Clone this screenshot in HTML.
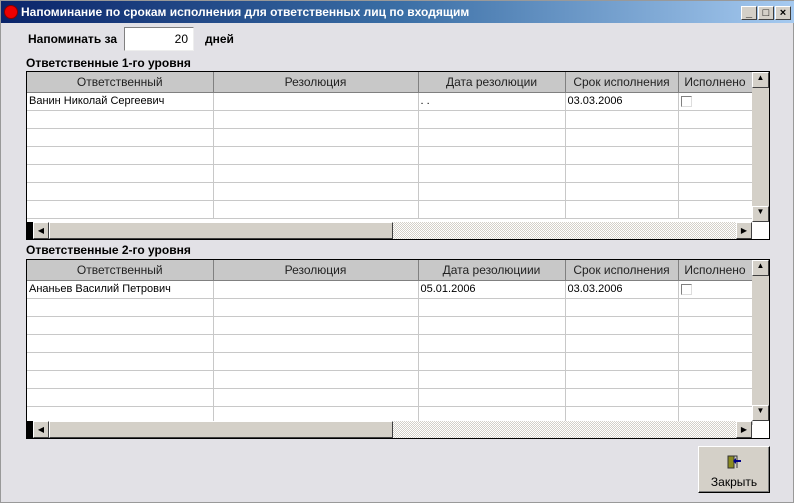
<!DOCTYPE html><html><head><meta charset="utf-8"><style>
*{margin:0;padding:0;box-sizing:border-box}
body{width:794px;height:503px;background:#e2e1e6;font-family:"Liberation Sans",sans-serif;position:relative;overflow:hidden;border:1px solid #999}
.abs{position:absolute}
.title{left:0;top:0;width:794px;height:22px;background:linear-gradient(90deg,#0a246a,#3a6ea5 50%,#a6caf0);color:#fff;font-weight:bold;font-size:12px;line-height:22px;padding-left:20px}
.dot{left:3px;top:4px;width:14px;height:14px;border-radius:50%;background:#e00;border:1px solid #800}
.wb{top:5px;width:16px;height:14px;background:#d4d0c8;border:1px solid;border-color:#fff #404040 #404040 #fff;font-size:11px;line-height:12px;text-align:center;color:#000;font-weight:bold}
.lbl{font-size:12px;font-weight:bold}
.grid{border:1px solid #000;background:#fff;overflow:hidden}
table{border-collapse:collapse;font-size:11px;table-layout:fixed}
th{background:#c8c8c8;font-weight:normal;font-size:12px;height:20px;border-right:1px solid #808080;border-bottom:1px solid #808080;color:#222}
td{height:18px;border-right:1px solid #c8c8c8;border-bottom:1px solid #c8c8c8;padding-left:2px;white-space:nowrap}
.cb{display:inline-block;width:11px;height:11px;border:1px solid #808080;border-right-color:#ddd;border-bottom-color:#ddd;vertical-align:middle}
.vs{background:#d4d0c8}
.btn{background:#d4d0c8;border:1px solid;border-color:#fff #404040 #404040 #fff}
.hs{background:repeating-conic-gradient(#d4d0c8 0 25%,#fff 0 50%) 0 0/2px 2px}
</style></head><body>
<div class="abs title">Напоминание по срокам исполнения для ответственных лиц по входящим</div>
<div class="abs dot"></div>
<div class="abs wb" style="left:740px">_</div><div class="abs wb" style="left:757px">□</div><div class="abs wb" style="left:774px">×</div>
<div class="abs lbl" style="left:27px;top:31px">Напоминать за</div>
<div class="abs" style="left:123px;top:26px;width:70px;height:24px;background:#fff;border:1px solid;border-color:#808080 #eee #eee #808080;font-size:12px;text-align:right;padding:4px 5px 0 0">20</div>
<div class="abs lbl" style="left:204px;top:31px">дней</div>

<div class="abs lbl" style="left:25px;top:55px">Ответственные 1-го уровня</div>
<div class="abs grid" style="left:25px;top:70px;width:744px;height:169px">
<table style="width:725px"><colgroup><col style="width:186px"><col style="width:205px"><col style="width:147px"><col style="width:113px"><col style="width:74px"></colgroup>
<tr><th>Ответственный</th><th>Резолюция</th><th>Дата резолюции</th><th>Срок исполнения</th><th>Исполнено</th></tr>
<tr><td>Ванин Николай Сергеевич</td><td></td><td>. .</td><td>03.03.2006</td><td><span class="cb"></span></td></tr>
<tr><td></td><td></td><td></td><td></td><td></td></tr><tr><td></td><td></td><td></td><td></td><td></td></tr><tr><td></td><td></td><td></td><td></td><td></td></tr><tr><td></td><td></td><td></td><td></td><td></td></tr><tr><td></td><td></td><td></td><td></td><td></td></tr><tr><td></td><td></td><td></td><td></td><td></td></tr></table>
<div class="abs vs" style="left:725px;top:0;width:17px;height:150px"><div class="btn" style="height:16px;font-size:8px;text-align:center">▲</div><div class="btn" style="position:absolute;top:134px;width:17px;height:16px;font-size:8px;text-align:center">▼</div></div>
<div class="abs hs" style="left:0;top:150px;width:725px;height:17px"><div class="abs" style="left:0;top:0;width:6px;height:17px;background:#000"></div><div class="abs btn" style="left:6px;top:0;width:16px;height:17px;font-size:8px;text-align:center;line-height:15px">◀</div><div class="abs btn" style="left:22px;top:0;width:344px;height:17px"></div><div class="abs btn" style="left:709px;top:0;width:16px;height:17px;font-size:8px;text-align:center;line-height:15px">▶</div></div>
</div>

<div class="abs lbl" style="left:25px;top:242px">Ответственные 2-го уровня</div>
<div class="abs grid" style="left:25px;top:258px;width:744px;height:180px">
<table style="width:725px"><colgroup><col style="width:186px"><col style="width:205px"><col style="width:147px"><col style="width:113px"><col style="width:74px"></colgroup>
<tr><th>Ответственный</th><th>Резолюция</th><th>Дата резолюциии</th><th>Срок исполнения</th><th>Исполнено</th></tr>
<tr><td>Ананьев Василий Петрович</td><td></td><td>05.01.2006</td><td>03.03.2006</td><td><span class="cb"></span></td></tr>
<tr><td></td><td></td><td></td><td></td><td></td></tr><tr><td></td><td></td><td></td><td></td><td></td></tr><tr><td></td><td></td><td></td><td></td><td></td></tr><tr><td></td><td></td><td></td><td></td><td></td></tr><tr><td></td><td></td><td></td><td></td><td></td></tr><tr><td></td><td></td><td></td><td></td><td></td></tr><tr><td></td><td></td><td></td><td></td><td></td></tr></table>
<div class="abs vs" style="left:725px;top:0;width:17px;height:161px"><div class="btn" style="height:16px;font-size:8px;text-align:center">▲</div><div class="btn" style="position:absolute;top:145px;width:17px;height:16px;font-size:8px;text-align:center">▼</div></div>
<div class="abs hs" style="left:0;top:161px;width:725px;height:17px"><div class="abs" style="left:0;top:0;width:6px;height:17px;background:#000"></div><div class="abs btn" style="left:6px;top:0;width:16px;height:17px;font-size:8px;text-align:center;line-height:15px">◀</div><div class="abs btn" style="left:22px;top:0;width:344px;height:17px"></div><div class="abs btn" style="left:709px;top:0;width:16px;height:17px;font-size:8px;text-align:center;line-height:15px">▶</div></div>
</div>

<div class="abs" style="left:697px;top:445px;width:72px;height:47px;background:#d4d0c8;border:1px solid;border-color:#fff #000 #000 #fff;box-shadow:inset -1px -1px #808080">
<svg class="abs" style="left:27px;top:7px" width="16" height="16"><rect x="2" y="2" width="6" height="12" fill="#8a8a20" stroke="#333"/><path d="M8 2h3v12" stroke="#333" fill="none"/><path d="M9 7h6" stroke="#008" stroke-width="2"/><path d="M10 4l-3 3 3 3z" fill="#008"/></svg>
<div class="abs" style="left:0;top:28px;width:70px;text-align:center;font-size:12px">Закрыть</div></div>
</body></html>
